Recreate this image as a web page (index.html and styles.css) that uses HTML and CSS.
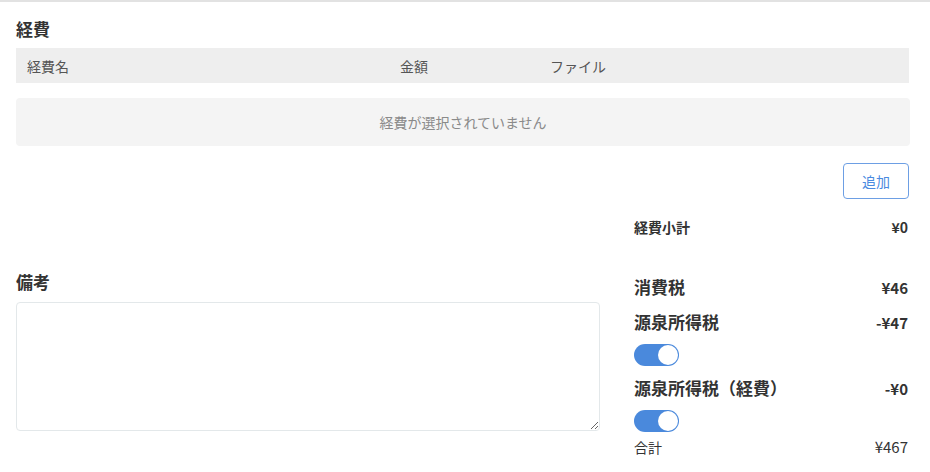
FILE: index.html
```html
<!DOCTYPE html>
<html lang="ja">
<head>
<meta charset="utf-8">
<link rel="stylesheet" href="styles.css">
</head>
<body>
<div class="page">
  <h2 class="section-title">経費</h2>
  <div class="table-head">
    <span class="col-name">経費名</span>
    <span class="col-amount">金額</span>
    <span class="col-file">ファイル</span>
  </div>
  <div class="empty-row">経費が選択されていません</div>
  <div class="actions">
    <button class="btn-add" type="button">追加</button>
  </div>
  <div class="bottom">
    <div class="notes">
      <h2 class="section-title notes-title">備考</h2>
      <textarea class="notes-input"></textarea>
    </div>
    <div class="summary">
      <div class="row row-small row-bold first">
        <span>経費小計</span><span>¥0</span>
      </div>
      <div class="row row-big tax">
        <span>消費税</span><span class="val">¥46</span>
      </div>
      <div class="row row-big gap8">
        <span>源泉所得税</span><span class="val">-¥47</span>
      </div>
      <div class="toggle on"><span class="knob"></span></div>
      <div class="row row-big gap9">
        <span>源泉所得税（経費）</span><span class="val">-¥0</span>
      </div>
      <div class="toggle on"><span class="knob"></span></div>
      <div class="row row-small total">
        <span>合計</span><span class="val">¥467</span>
      </div>
    </div>
  </div>
</div>
</body>
</html>
```

FILE: styles.css
```css
* { box-sizing: border-box; }
html, body { margin: 0; padding: 0; background: #fff; }
body {
  font-family: "Noto Sans CJK JP", "Noto Sans", sans-serif;
  color: #333;
  border-top: 2px solid #e2e2e2;
}
.page {
  padding: 16px 21px 0 16px;
}
.section-title {
  margin: 0;
  font-size: 17px;
  line-height: 22px;
  font-weight: 700;
  color: #333;
}
.table-head {
  margin-top: 8px;
  height: 35px;
  background: #eeeeee;
  display: grid;
  grid-template-columns: 373px 150px 1fr;
  align-items: center;
  padding-left: 11px;
  font-size: 14px;
  color: #555;
}
.empty-row {
  margin-top: 15px;
  margin-right: -1px;
  height: 48px;
  background: #f4f4f4;
  border-radius: 4px;
  display: flex;
  align-items: center;
  justify-content: center;
  font-size: 14px;
  color: #8a8a8a;
}
.actions {
  display: flex;
  justify-content: flex-end;
  margin-top: 17px;
}
.btn-add {
  width: 66px;
  height: 36px;
  border: 1px solid #6d9fe4;
  border-radius: 4px;
  background: #fff;
  color: #4a8ae0;
  font-family: inherit;
  font-size: 14px;
  padding: 0;
}
.bottom {
  display: grid;
  grid-template-columns: 584px 1fr;
  column-gap: 34px;
  align-items: start;
}
.notes-title {
  margin-top: 72px;
}
.notes-input {
  display: block;
  margin-top: 9px;
  width: 584px;
  height: 129px;
  border: 1px solid #e3e8ea;
  border-radius: 4px;
  resize: both;
  font-family: inherit;
}
.summary {
  display: flex;
  flex-direction: column;
}
.row {
  display: flex;
  justify-content: space-between;
  align-items: baseline;
  padding-right: 1px;
}
.row-small {
  font-size: 14px;
  line-height: 24px;
}
.row-bold { font-weight: 700; }
.first { margin-top: 16px; }
.row-big {
  font-size: 17px;
  line-height: 26px;
  font-weight: 700;
}
.row-big .val {
  font-size: 15px;
  font-weight: 700;
}
.tax { margin-top: 35px; }
.gap8 { margin-top: 8px; }
.gap9 { margin-top: 9px; }
.total {
  margin-top: 3px;
}
.total .val { font-size: 15px; }
.toggle {
  margin-top: 8px;
  width: 45px;
  height: 22px;
  border-radius: 11px;
  background: #4a89dc;
  position: relative;
}
.toggle .knob {
  position: absolute;
  top: 1px;
  right: 1px;
  width: 20px;
  height: 20px;
  border-radius: 50%;
  background: #fff;
}
```
